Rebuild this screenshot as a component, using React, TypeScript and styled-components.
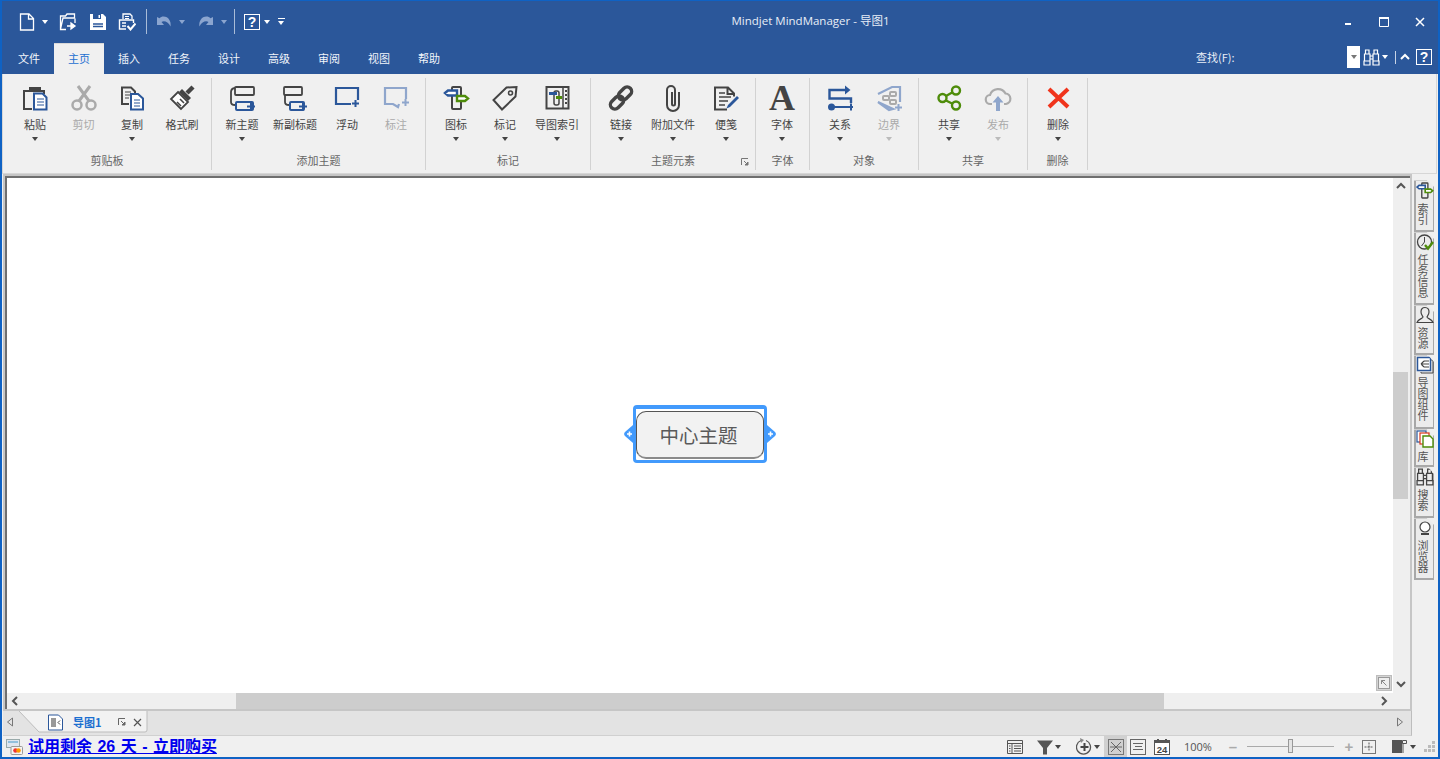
import React from "react";
import styled, { createGlobalStyle } from "styled-components";

const BLUE = "#2b579a";
const DARK = "#444";
const GREEN = "#4e8c0a";
const OFF = "#aaa";
const OFFBLUE = "#8fa6cc";

const GlobalStyle = createGlobalStyle`
  html, body { margin: 0; padding: 0; overflow: hidden; }
  body { font-family: "Noto Sans CJK SC", "Liberation Sans", sans-serif; }
  * { box-sizing: border-box; }
`;

/* ---------- drawings ---------- */

const Svg = styled.svg<{ $s?: number }>`
  width: ${(p) => p.$s ?? 28}px;
  height: ${(p) => p.$s ?? 28}px;
  display: block;
  flex: none;
  fill: none;
`;

const Ico: React.FC<{ s?: number; vb?: number; children: React.ReactNode }> = ({ s, vb = 28, children }) => (
  <Svg $s={s} viewBox={`0 0 ${vb} ${vb}`}>
    {children}
  </Svg>
);

const FlagPost: React.FC<{ s?: number }> = ({ s }) => (
  <Ico s={s}>
    <rect x="10" y="3" width="9" height="22" rx="1" stroke={DARK} strokeWidth="2" />
    <path d="M3 9l3-2.500h9v5H6z" fill="#fff" stroke={BLUE} strokeWidth="2.400" />
    <path d="M15 12h8l3 2.500-3 2.500h-8z" fill="#fff" stroke={GREEN} strokeWidth="2.400" />
  </Ico>
);

const icons: Record<string, React.ReactNode> = {
  paste: (
    <Ico>
      <path d="M11 25H3V7h20v3" stroke={DARK} strokeWidth="2" />
      <path d="M8 6V3h12v3z" fill={DARK} />
      <path d="M13 9.500h8.500l4 4V25.500H13z" fill="#fff" stroke={BLUE} strokeWidth="2" />
      <path d="M16 15h7M16 18h7M16 21h7" stroke={BLUE} strokeWidth="1.200" />
    </Ico>
  ),
  cut: (
    <Ico>
      <circle cx="7" cy="21" r="4.500" stroke={OFF} strokeWidth="2.500" />
      <circle cx="21" cy="21" r="4.500" stroke={OFF} strokeWidth="2.500" />
      <path d="M9 17L20 2M19 17L8 2" stroke={OFF} strokeWidth="3" />
    </Ico>
  ),
  copy: (
    <Ico>
      <path d="M11 20H4V3.500h9l4 4v2" stroke={DARK} strokeWidth="2" />
      <path d="M7 8h6M7 11h5M7 14h4" stroke={DARK} strokeWidth="1.200" />
      <path d="M13 10h7l5 4.500v11H13z" fill="#fff" stroke={BLUE} strokeWidth="2" />
      <path d="M16 16h6M16 19h6M16 22h6" stroke={BLUE} strokeWidth="1.200" />
    </Ico>
  ),
  painter: (
    <Ico>
      <path d="M19 9l6-6" stroke={DARK} strokeWidth="4.500" />
      <path d="M14 5l9 9-3 3-9-9z" fill={DARK} />
      <path d="M10 8l10 10-7 7-10-10z" fill="#fff" stroke={DARK} strokeWidth="1.800" />
      <path d="M9 18l4 4M12 15l4 4" stroke={DARK} strokeWidth="1.600" />
    </Ico>
  ),
  topic: (
    <Ico>
      <rect x="7" y="3" width="19" height="8" rx="1" stroke={DARK} strokeWidth="1.800" />
      <path d="M7 4C3.500 4.500 3 6 3 8v10c0 2 1 3 4 3" stroke={DARK} strokeWidth="1.800" />
      <rect x="8" y="18" width="17" height="8" rx="1" stroke={BLUE} strokeWidth="2" />
      <path d="M19 22.500h8M23 18.500v8" stroke={BLUE} strokeWidth="2" />
    </Ico>
  ),
  subtopic: (
    <Ico>
      <rect x="3" y="3" width="18" height="8" rx="1" stroke={DARK} strokeWidth="1.800" />
      <path d="M4 11v7c0 2 1 3 4 3h2" stroke={DARK} strokeWidth="1.800" />
      <rect x="9" y="18" width="14" height="8" rx="1" stroke={BLUE} strokeWidth="2" />
      <path d="M18 22.500h8M22 18.500v8" stroke={BLUE} strokeWidth="2" />
    </Ico>
  ),
  float: (
    <Ico>
      <path d="M18 20H3V4h22v12" stroke={BLUE} strokeWidth="2.200" />
      <path d="M19 19.500h7M22.500 16v7" stroke={BLUE} strokeWidth="2" />
    </Ico>
  ),
  callout: (
    <Ico>
      <path d="M17 20l-1 3-5-3H3V4h21v11" stroke={OFFBLUE} strokeWidth="2.200" />
      <path d="M20 18.500h7M23.500 15v7" stroke={OFFBLUE} strokeWidth="2" />
    </Ico>
  ),
  flag: <FlagPost />,
  tag: (
    <Ico>
      <path d="M25.500 3l-1 9.500L11 25.500 2.500 16 15.500 3.500z" stroke={DARK} strokeWidth="2" />
      <circle cx="19.500" cy="9" r="2" stroke={DARK} strokeWidth="1.600" />
    </Ico>
  ),
  mapIndex: (
    <Ico>
      <rect x="3.500" y="3" width="22" height="21.500" stroke={DARK} strokeWidth="2" />
      <path d="M20 3v21" stroke={DARK} strokeWidth="1.500" />
      <path d="M22 7h2M22 11h2M22 15h2M22 19h2" stroke={DARK} strokeWidth="1.800" />
      <rect x="11" y="7" width="5" height="14" rx="2" stroke={DARK} strokeWidth="1.500" />
      <path d="M6 11h8v-3H6z" fill={BLUE} />
      <path d="M13 12h6v3h-6z" fill={GREEN} />
    </Ico>
  ),
  link: (
    <Ico>
      <rect x="2.500" y="14" width="15" height="9" rx="4.500" transform="rotate(-45 10 18.500)" stroke={DARK} strokeWidth="3.400" />
      <rect x="10.500" y="5" width="15" height="9" rx="4.500" transform="rotate(-45 18 9.500)" stroke={DARK} strokeWidth="3.400" />
    </Ico>
  ),
  clip: (
    <Ico>
      <path d="M20 8v13a6 6 0 0 1-12 0V6a4 4 0 0 1 8 0v14a1.500 1.500 0 0 1-3 0V8" stroke={DARK} strokeWidth="2" />
    </Ico>
  ),
  note: (
    <Ico>
      <path d="M15 25.500H3V3.500h13l6 6v3M15.500 3.500v6.500h6.500" stroke={DARK} strokeWidth="2" />
      <path d="M7 9h6M7 13h12M7 17h9M7 21h6" stroke={DARK} strokeWidth="1.400" />
      <path d="M25 12l2 2-9 9-3.500 1.500L16 21z" fill={BLUE} />
    </Ico>
  ),
  relation: (
    <Ico>
      <path d="M20 6H3.500v8.500H25V19" stroke={BLUE} strokeWidth="2.400" />
      <path d="M19 1.500L24.500 6 19 10.500z" fill={BLUE} />
      <circle cx="5.500" cy="23" r="3.500" fill={BLUE} />
      <path d="M8 23h19M25 19.500v7" stroke={BLUE} strokeWidth="2" />
    </Ico>
  ),
  boundary: (
    <Ico>
      <path d="M3 10L17 3h8v15M18 25l-4 1L3 18z" stroke={OFFBLUE} strokeWidth="2.200" />
      <rect x="8" y="12" width="6" height="4" rx="1" stroke={OFF} strokeWidth="2" />
      <rect x="15" y="8" width="6" height="4" rx="1" stroke={OFF} strokeWidth="2" />
      <rect x="15" y="16" width="6" height="4" rx="1" stroke={OFF} strokeWidth="2" />
      <path d="M20 23.500h7M23.500 20v7" stroke={OFFBLUE} strokeWidth="2" />
    </Ico>
  ),
  share: (
    <Ico>
      <path d="M11 12l7-4M11 16.500l7 3.500" stroke={GREEN} strokeWidth="2.400" />
      <circle cx="7.500" cy="14" r="4" stroke={GREEN} strokeWidth="2.400" />
      <circle cx="21" cy="6.500" r="4" stroke={GREEN} strokeWidth="2.400" />
      <circle cx="21" cy="21.500" r="4" stroke={GREEN} strokeWidth="2.400" />
    </Ico>
  ),
  publish: (
    <Ico>
      <path d="M8 20H6.500a4.500 4.500 0 0 1-.5-9A8.500 8.500 0 0 1 21.500 9.500 5.300 5.300 0 0 1 22 20h-2" stroke={OFF} strokeWidth="2.200" />
      <path d="M14 12l-5.500 6.500H12V27h4v-8.500h3.500z" fill={OFFBLUE} />
    </Ico>
  ),
  remove: (
    <Ico>
      <path d="M5 5l19 18M24 5L5 23" stroke="#f0341c" strokeWidth="4" />
    </Ico>
  )
};

const Launcher: React.FC<{ c?: string }> = ({ c = "#777" }) => (
  <Ico s={8} vb={8}>
    <path d="M.5 7V.5H7" stroke={c} />
    <path d="M3 3l4 4M7 4v3H4z" fill={c} stroke={c} />
  </Ico>
);

const NewDocIcon = () => (
  <Ico s={18} vb={18}>
    <path d="M2.500 1h8.500l4.500 4.500V17H2.500zM10.500 1v5h5" stroke="#fff" strokeWidth="1.300" />
  </Ico>
);
const OpenIcon = () => (
  <Ico s={18} vb={18}>
    <path d="M7 16.500H1.500V3h5l1.500-2h7.500v4H4L1.500 16" stroke="#fff" strokeWidth="1.300" />
    <path d="M16 5.500V10M8 13h6M12 10l4 3-4 3z" stroke="#fff" strokeWidth="1.300" fill="#fff" />
  </Ico>
);
const SaveIcon = () => (
  <Ico s={18} vb={18}>
    <path d="M1 1h13l3 3v13H1z" fill="#fff" />
    <path d="M4 1h8v5H4z" fill={BLUE} />
    <path d="M9.500 2h1.500v3H9.500z" fill="#fff" />
    <path d="M4 11h10M4 13.500h10" stroke={BLUE} strokeWidth="1.300" />
  </Ico>
);
const PrintIcon = () => (
  <Ico s={18} vb={18}>
    <path d="M5 6V1h7l2 2v3" stroke="#fff" strokeWidth="1.300" />
    <path d="M7 3.500h4M7 5.500h4" stroke="#fff" />
    <path d="M8 16H1.500V7h14v3" stroke="#fff" strokeWidth="1.400" />
    <path d="M4 13h4M4 10h4" stroke="#fff" strokeWidth="1.600" />
    <path d="M9.500 13l3 3.500 5-6" stroke="#fff" strokeWidth="2" />
  </Ico>
);
const UndoIcon: React.FC<{ flip?: boolean }> = ({ flip }) => (
  <Ico s={16} vb={16}>
    <path
      transform={flip ? "matrix(-1 0 0 1 16 0)" : undefined}
      d="M1 3v8h7L5.500 8C8 6.500 12 7.500 14.500 12.500 15.500 7.500 12.500 2.500 7.500 2.500c-1.500 0-3 .7-4 1.700z"
      fill="#8ba5cf"
    />
  </Ico>
);
const HelpBox: React.FC<{ s?: number }> = ({ s = 16 }) => (
  <HelpFrame $s={s}>?</HelpFrame>
);
const BinocularIcon: React.FC<{ c?: string; s?: number }> = ({ c = "#fff", s = 17 }) => (
  <Ico s={s} vb={17}>
    <path d="M2.500 1H6v4H2.500zM11 1h3.500v4H11zM1.500 5H7v7H1.500zM10 5h5.500v7H10zM1 12h6v4H1zM10 12h6v4h-6zM7 7h3M7 10h3" stroke={c} strokeWidth="1.200" />
  </Ico>
);

/* ---------- window chrome ---------- */

const Window = styled.div`
  width: 1440px;
  height: 759px;
  display: flex;
  flex-direction: column;
  background: #f0f0f0;
  border: solid #0f62c4;
  border-width: 1px 2px 2px 2px;
  overflow: hidden;
`;

const TitleBar = styled.div`
  height: 41px;
  flex: none;
  display: flex;
  align-items: center;
  background: ${BLUE};
  color: #fff;
`;

const Qat = styled.div`
  width: 296px;
  flex: none;
  height: 36px;
  padding-left: 14px;
  display: flex;
  align-items: center;
`;

const Slot = styled.div<{ $w: number; $ml?: number }>`
  width: ${(p) => p.$w}px;
  margin-left: ${(p) => p.$ml ?? 0}px;
  flex: none;
  display: flex;
  align-items: center;
  justify-content: center;
`;

const QatSep = styled.div`
  width: 1px;
  height: 25px;
  background: #a9bcd8;
`;

const Caret = styled.span<{ $c?: string }>`
  display: block;
  width: 0;
  height: 0;
  flex: none;
  border-left: 3.500px solid transparent;
  border-right: 3.500px solid transparent;
  border-top: 4px solid ${(p) => p.$c ?? "#fff"};
`;

const CustomizeMark = styled.span`
  display: block;
  width: 7px;
  border-top: 1px solid #fff;
  padding-top: 2px;
  &::after {
    content: "";
    display: block;
    width: 0;
    border-left: 3.500px solid transparent;
    border-right: 3.500px solid transparent;
    border-top: 4px solid #fff;
  }
`;

const HelpFrame = styled.span<{ $s: number }>`
  display: flex;
  align-items: center;
  justify-content: center;
  width: ${(p) => p.$s}px;
  height: ${(p) => p.$s}px;
  border: 1px solid #fff;
  color: #fff;
  font: bold 14px "Liberation Sans", sans-serif;
`;

const Title = styled.div`
  flex: 1;
  text-align: center;
  font-size: 11.500px;
  line-height: 16px;
  color: #e8eef7;
  padding-right: 7px;
  padding-bottom: 2px;
  font-family: "Open Sans", "Noto Sans CJK SC", sans-serif;
`;

const WindowButtons = styled.div`
  width: 108px;
  flex: none;
  height: 32px;
  display: flex;
  align-items: center;
`;

const TabRow = styled.div`
  height: 32px;
  flex: none;
  padding-left: 2px;
  display: flex;
  align-items: stretch;
  background: ${BLUE};
  color: #f2f5fa;
  font-size: 11px;
`;

const MenuTab = styled.div<{ $active?: boolean }>`
  width: 50px;
  flex: none;
  padding-top: 5px;
  line-height: 18px;
  text-align: center;
  margin-top: 1px;
  color: ${(p) => (p.$active ? "#1c6fd0" : "#f2f5fa")};
  background: ${(p) => (p.$active ? "#f0f0f0" : "transparent")};
  border-top: 1px solid ${(p) => (p.$active ? "#d8d8d8" : "transparent")};
`;

const FindArea = styled.div`
  margin-left: auto;
  display: flex;
  align-items: center;
  padding: 0 6px 2px 0;
`;

const FindLabel = styled.span`
  width: 151px;
  font-size: 11px;
  color: #e8eef7;
`;

const FindBox = styled.div`
  width: 13px;
  height: 22px;
  background: #fff;
  display: flex;
  align-items: center;
  justify-content: center;
`;

const ThinSep = styled.span`
  display: block;
  width: 1px;
  height: 13px;
  background: #c8d4e6;
`;

/* ---------- ribbon ---------- */

const Ribbon = styled.div`
  height: 100px;
  flex: none;
  margin-right: 1px;
  display: flex;
  background: #f0f0f0;
  border: solid #d6d6d6;
  border-width: 0 1px 1px 1px;
`;

const Group = styled.section<{ $w: number }>`
  width: ${(p) => p.$w}px;
  flex: none;
  height: 92px;
  margin-top: 4px;
  display: flex;
  flex-direction: column;
  position: relative;
  border-right: 1px solid #d2d2d2;
`;

const GroupButtons = styled.div<{ $pad: number }>`
  height: 74px;
  padding-left: ${(p) => p.$pad}px;
  display: flex;
`;

const GroupName = styled.div`
  height: 16px;
  line-height: 16px;
  text-align: center;
  font-size: 11px;
  color: #666;
`;

const DialogMark = styled.span`
  position: absolute;
  right: 6px;
  bottom: 4px;
`;

const RibbonButton = styled.div<{ $w: number; $off?: boolean }>`
  width: ${(p) => p.$w}px;
  flex: none;
  padding-top: 6px;
  display: flex;
  flex-direction: column;
  align-items: center;
  color: ${(p) => (p.$off ? "#aaa" : DARK)};
  font-size: 11px;
`;

const ButtonLabel = styled.div`
  margin-top: 4px;
  height: 16px;
  line-height: 16px;
  white-space: nowrap;
`;

const CaretRow = styled.div`
  margin-top: 5px;
  height: 4px;
`;

const BigLetter = styled.div`
  width: 28px;
  height: 28px;
  text-align: center;
  font: bold 36px/28px "Liberation Serif", serif;
  color: ${DARK};
`;

/* ---------- workspace ---------- */

const Body = styled.div`
  flex: 1;
  min-height: 0;
  display: flex;
`;

const MainColumn = styled.div`
  flex: 1;
  min-width: 0;
  display: flex;
  flex-direction: column;
`;

const Frame = styled.div`
  flex: 1;
  min-height: 0;
  margin-left: 1px;
  display: flex;
  border: 2px solid #c6c6c6;
`;

const FrameInner = styled.div`
  flex: 1;
  min-width: 0;
  display: flex;
  border-top: 2px solid #6f6f6f;
  border-left: 2px solid #6f6f6f;
`;

const CanvasColumn = styled.div`
  flex: 1;
  min-width: 0;
  display: flex;
  flex-direction: column;
`;

const Canvas = styled.div`
  flex: 1;
  min-height: 0;
  position: relative;
  background: #fff;
  display: flex;
  align-items: center;
  justify-content: center;
  padding-bottom: 3px;
`;

const NavCorner = styled.div`
  position: absolute;
  right: 1px;
  bottom: 2px;
  width: 16px;
  height: 16px;
  background: #d4d4d4;
  border: 1px solid #bdbdbd;
  display: flex;
  align-items: center;
  justify-content: center;
`;

const Selection = styled.div`
  position: relative;
  width: 134px;
  height: 58px;
  background: #fff;
  border: 3px solid #429afc;
  border-top-width: 4px;
  border-radius: 4px;
  padding: 2px 0 1px;
`;

const Topic = styled.div`
  height: 48px;
  padding-right: 3px;
  background: #f2f2f2;
  border: 1px solid #555;
  border-bottom: 2px solid #8a8a8a;
  border-radius: 10px;
  display: flex;
  align-items: center;
  justify-content: center;
  color: #5a5a5a;
  font-size: 19.500px;
  line-height: 24px;
`;

const Grip = styled.svg<{ $side: "left" | "right" }>`
  position: absolute;
  top: 16px;
  ${(p) => p.$side}: -12px;
  width: 9px;
  height: 18px;
  display: block;
`;

const HScroll = styled.div`
  height: 16px;
  flex: none;
  background: #efefef;
  display: flex;
  align-items: center;
`;

const HThumb = styled.div`
  height: 16px;
  width: 928px;
  margin-left: 213px;
  margin-right: 212px;
  background: #cdcdcd;
`;

const VScroll = styled.div`
  width: 17px;
  flex: none;
  background: #efefef;
  display: flex;
  flex-direction: column;
`;

const VThumb = styled.div`
  width: 15px;
  height: 127px;
  margin-top: 178px;
  margin-bottom: 177px;
  background: #cdcdcd;
`;

const ArrowSlot = styled.div<{ $w: number; $h: number }>`
  width: ${(p) => p.$w}px;
  height: ${(p) => p.$h}px;
  flex: none;
  display: flex;
  align-items: center;
  justify-content: center;
`;

const Chevron: React.FC<{ dir: "up" | "down" | "left" | "right"; c?: string }> = ({ dir, c = "#555" }) => {
  const d = { up: "M1 7l4-4 4 4", down: "M1 3l4 4 4-4", left: "M7 1L3 5l4 4", right: "M3 1l4 4-4 4" }[dir];
  return (
    <Ico s={10} vb={10}>
      <path d={d} stroke={c} strokeWidth="2" />
    </Ico>
  );
};

/* ---------- document tab strip ---------- */

const DocStrip = styled.div`
  height: 25px;
  flex: none;
  background: #e3e3e3;
  display: flex;
  align-items: flex-start;
  border-right: 1px solid #bdbdbd;
  border-bottom: 1px solid #d0d0d0;
  margin-left: 1px;
`;

const DocTab = styled.div`
  position: relative;
  width: 130px;
  height: 22px;
  margin-left: 2px;
  padding-left: 28px;
  display: flex;
  align-items: center;
`;

const DocTabShape = styled.svg`
  position: absolute;
  left: 0;
  top: 0;
  width: 130px;
  height: 22px;
`;

const DocTitle = styled.span`
  position: relative;
  margin-left: 9px;
  width: 45px;
  color: #1c6fd0;
  font-size: 11px;
  font-weight: 700;
`;

const DocTabIcons = styled.span`
  position: relative;
  display: flex;
  align-items: center;
  gap: 7px;
`;

const Triangle: React.FC<{ dir: "left" | "right" }> = ({ dir }) => (
  <Ico s={10} vb={10}>
    <path d={dir === "left" ? "M7.500 1v8L2.500 5z" : "M2.500 1v8l5-4z"} stroke="#777" />
  </Ico>
);

const StripArrow = styled(Slot)<{ $end?: boolean }>`
  height: 22px;
  margin-left: ${(p) => (p.$end ? "auto" : "0")};
  margin-right: ${(p) => (p.$end ? "6px" : "0")};
`;

/* ---------- right sidebar ---------- */

const Sidebar = styled.aside`
  width: 26px;
  flex: none;
  padding: 6px 0 0 2px;
  display: flex;
  flex-direction: column;
`;

const SideTab = styled.div<{ $h: number }>`
  position: relative;
  width: 20px;
  height: ${(p) => p.$h}px;
  flex: none;
  padding-top: 1px;
  background: #ececec;
  border: solid #a8a8a8;
  border-width: 0 1px 2px 2px;
  display: flex;
  flex-direction: column;
  align-items: center;
  clip-path: polygon(0 0, 70% 0, 100% 7px, 100% 100%, 0 100%);
  &::before {
    content: "";
    position: absolute;
    left: -2px;
    right: 6px;
    top: 0;
    border-top: 1px solid #cfcfcf;
  }
`;

const SideText = styled.div`
  writing-mode: vertical-rl;
  margin: 3px 3px 0 0;
  color: #555;
  font-size: 11px;
  line-height: 14px;
`;

/* ---------- status bar ---------- */

const StatusBar = styled.footer`
  height: 21px;
  flex: none;
  padding: 0 2px 0 4px;
  display: flex;
  align-items: center;
`;

const BuyLink = styled.a`
  margin-left: 5px;
  padding-top: 1px;
  color: #0000ee;
  font-size: 16px;
  font-weight: 700;
  line-height: 20px;
  word-spacing: 1px;
  text-decoration: underline;
  font-family: "Liberation Sans", "Noto Sans CJK SC", sans-serif;
  white-space: nowrap;
`;

const StatusTools = styled.div`
  margin-left: auto;
  height: 100%;
  display: flex;
  align-items: center;
`;

const ActiveTool = styled.div`
  width: 23px;
  height: 100%;
  margin-left: 2px;
  background: #d0d0d0;
  display: flex;
  align-items: center;
  justify-content: center;
`;

const Zoom = styled.span`
  width: 28px;
  margin-left: 14px;
  font: 11px "Open Sans", sans-serif;
  color: #555;
  white-space: nowrap;
`;

const SliderTrack = styled.div`
  position: relative;
  width: 87px;
  height: 1px;
  margin-left: 9px;
  background: #aaa;
`;

const SliderThumb = styled.div`
  position: absolute;
  left: 41px;
  top: -7px;
  width: 5px;
  height: 14px;
  background: #e4e4e4;
  border: 1px solid #999;
`;

const ZoomSign = styled.span`
  display: block;
  color: #aaa;
  font: bold 15px/15px "Liberation Sans", sans-serif;
`;

const GripDots = styled.svg`
  width: 12px;
  height: 12px;
  margin-left: 6px;
  fill: #bbb;
`;

/* ---------- data ---------- */

type Btn = { label: string; icon: string; w: number; caret?: boolean; off?: boolean };
type Grp = { name: string; w: number; pad: number; launcher?: boolean; buttons: Btn[] };

const groups: Grp[] = [
  {
    name: "剪贴板", w: 209, pad: 8,
    buttons: [
      { label: "粘贴", icon: "paste", w: 48, caret: true },
      { label: "剪切", icon: "cut", w: 49, off: true },
      { label: "复制", icon: "copy", w: 48, caret: true },
      { label: "格式刷", icon: "painter", w: 52 }
    ]
  },
  {
    name: "添加主题", w: 214, pad: 6,
    buttons: [
      { label: "新主题", icon: "topic", w: 48, caret: true },
      { label: "新副标题", icon: "subtopic", w: 58 },
      { label: "浮动", icon: "float", w: 46 },
      { label: "标注", icon: "callout", w: 52, off: true }
    ]
  },
  {
    name: "标记", w: 165, pad: 6,
    buttons: [
      { label: "图标", icon: "flag", w: 48, caret: true },
      { label: "标记", icon: "tag", w: 50, caret: true },
      { label: "导图索引", icon: "mapIndex", w: 54, caret: true }
    ]
  },
  {
    name: "主题元素", w: 165, pad: 6, launcher: true,
    buttons: [
      { label: "链接", icon: "link", w: 48, caret: true },
      { label: "附加文件", icon: "clip", w: 56, caret: true },
      { label: "便笺", icon: "note", w: 50, caret: true }
    ]
  },
  {
    name: "字体", w: 54, pad: 2,
    buttons: [{ label: "字体", icon: "font", w: 48, caret: true }]
  },
  {
    name: "对象", w: 109, pad: 6,
    buttons: [
      { label: "关系", icon: "relation", w: 48, caret: true },
      { label: "边界", icon: "boundary", w: 50, caret: true, off: true }
    ]
  },
  {
    name: "共享", w: 109, pad: 6,
    buttons: [
      { label: "共享", icon: "share", w: 48, caret: true },
      { label: "发布", icon: "publish", w: 50, caret: true, off: true }
    ]
  },
  {
    name: "删除", w: 60, pad: 6,
    buttons: [{ label: "删除", icon: "remove", w: 48, caret: true }]
  }
];

const menuTabs = ["文件", "主页", "插入", "任务", "设计", "高级", "审阅", "视图", "帮助"];

const sideTabs: { label: string; h: number; icon: React.ReactNode }[] = [
  { label: "索引", h: 52, icon: <FlagPost s={19} /> },
  {
    label: "任务信息", h: 73,
    icon: (
      <Ico s={18} vb={18}>
        <circle cx="8.500" cy="9" r="7" stroke={DARK} strokeWidth="1.300" />
        <path d="M8.500 4v5l-3 4" stroke={DARK} />
        <path d="M9 12l3 3.500 5-6.500" stroke={GREEN} strokeWidth="2.400" />
      </Ico>
    )
  },
  {
    label: "资源", h: 50,
    icon: (
      <Ico s={18} vb={18}>
        <path d="M9 1.500c-3 0-4 2-4 4.500s1.500 4 2 5c0 1.500-5 2-6 5.500h16c-1-3.500-6-4-6-5.500.5-1 2-2.500 2-5S12 1.500 9 1.500z" stroke={DARK} strokeWidth="1.200" />
      </Ico>
    )
  },
  {
    label: "导图组件", h: 74,
    icon: (
      <Ico s={18} vb={18}>
        <path d="M15 4h2v13H5v-1" stroke={DARK} />
        <rect x="1.500" y="1.500" width="13" height="13" fill="#fff" stroke={BLUE} strokeWidth="1.500" />
        <path d="M5 8h8M8 5h5M8 11h5M5 8l3-3M5 8l3 3" stroke={DARK} strokeWidth="1.100" />
      </Ico>
    )
  },
  {
    label: "库", h: 38,
    icon: (
      <Ico s={18} vb={18}>
        <rect x="1" y="1" width="9" height="11" fill="#fff" stroke={BLUE} strokeWidth="1.200" />
        <rect x="4" y="3" width="9" height="11" fill="#fff" stroke="#d8351c" strokeWidth="1.200" />
        <path d="M7 6h7l3 3v8H7z" fill="#fff" stroke={GREEN} strokeWidth="1.400" />
      </Ico>
    )
  },
  { label: "搜索", h: 51, icon: <BinocularIcon c={DARK} s={18} /> },
  {
    label: "浏览器", h: 62,
    icon: (
      <Ico s={18} vb={18}>
        <circle cx="9" cy="8" r="5" fill="#fff" stroke={DARK} strokeWidth="1.200" />
        <path d="M5 14h8v2H5z" fill={DARK} />
      </Ico>
    )
  }
];

/* ---------- page ---------- */

const RibbonGroup: React.FC<{ g: Grp }> = ({ g }) => (
  <Group $w={g.w}>
    <GroupButtons $pad={g.pad}>
      {g.buttons.map((b) => (
        <RibbonButton key={b.label} $w={b.w} $off={b.off}>
          {b.icon === "font" ? <BigLetter>A</BigLetter> : icons[b.icon]}
          <ButtonLabel>{b.label}</ButtonLabel>
          {b.caret && (
            <CaretRow>
              <Caret $c={b.off ? "#bbb" : DARK} />
            </CaretRow>
          )}
        </RibbonButton>
      ))}
    </GroupButtons>
    <GroupName>{g.name}</GroupName>
    {g.launcher && (
      <DialogMark>
        <Launcher />
      </DialogMark>
    )}
  </Group>
);

export default function App() {
  return (
    <>
      <GlobalStyle />
      <Window>
        <TitleBar>
          <Qat>
            <Slot $w={22}><NewDocIcon /></Slot>
            <Slot $w={14}><Caret /></Slot>
            <Slot $w={32}><OpenIcon /></Slot>
            <Slot $w={28}><SaveIcon /></Slot>
            <Slot $w={30}><PrintIcon /></Slot>
            <Slot $w={8}><QatSep /></Slot>
            <Slot $w={28}><UndoIcon /></Slot>
            <Slot $w={8}><Caret $c="#8ba5cf" /></Slot>
            <Slot $w={30} $ml={5}><UndoIcon flip /></Slot>
            <Slot $w={5}><Caret $c="#8ba5cf" /></Slot>
            <Slot $w={16}><QatSep /></Slot>
            <Slot $w={20}><HelpBox /></Slot>
            <Slot $w={10}><Caret /></Slot>
            <Slot $w={18}><CustomizeMark /></Slot>
          </Qat>
          <Title>Mindjet MindManager - 导图1</Title>
          <WindowButtons>
            <Slot $w={36}>
              <Ico s={10} vb={10}><path d="M2 7h6" stroke="#fff" strokeWidth="2" /></Ico>
            </Slot>
            <Slot $w={36}>
              <Ico s={10} vb={10}><path d="M.5 1.500h9v8h-9z" stroke="#fff" /><path d="M0 1h10" stroke="#fff" strokeWidth="2" /></Ico>
            </Slot>
            <Slot $w={36}>
              <Ico s={10} vb={10}><path d="M1 1l8 8M9 1L1 9" stroke="#fff" strokeWidth="1.500" /></Ico>
            </Slot>
          </WindowButtons>
        </TitleBar>

        <TabRow>
          {menuTabs.map((t) => (
            <MenuTab key={t} $active={t === "主页"}>{t}</MenuTab>
          ))}
          <FindArea>
            <FindLabel>查找(F):</FindLabel>
            <FindBox><Caret $c="#777" /></FindBox>
            <Slot $w={22}><BinocularIcon /></Slot>
            <Slot $w={6}><Caret /></Slot>
            <Slot $w={14}><ThinSep /></Slot>
            <Slot $w={6}><Chevron dir="up" c="#fff" /></Slot>
            <Slot $w={16} $ml={8}><HelpBox /></Slot>
          </FindArea>
        </TabRow>

        <Ribbon>
          {groups.map((g) => (
            <RibbonGroup key={g.name + g.w} g={g} />
          ))}
        </Ribbon>

        <Body>
          <MainColumn>
            <Frame>
              <FrameInner>
                <CanvasColumn>
                  <Canvas>
                    <Selection>
                      <Grip $side="left" viewBox="0 0 9 18">
                        <path d="M9 0v18L1 11a3 3 0 0 1 0-4z" fill="#429afc" />
                        <path d="M3 9h5M5.500 6.500v5" stroke="#fff" strokeWidth="1.600" />
                      </Grip>
                      <Topic>中心主题</Topic>
                      <Grip $side="right" viewBox="0 0 9 18">
                        <path d="M0 0v18l8-7a3 3 0 0 0 0-4z" fill="#429afc" />
                        <path d="M1 9h5M3.500 6.500v5" stroke="#fff" strokeWidth="1.600" />
                      </Grip>
                    </Selection>
                    <NavCorner>
                      <Ico s={12} vb={12}>
                        <rect x=".5" y=".5" width="11" height="11" fill="#eee" stroke="#999" />
                        <path d="M8.500 8.500L3.500 3.500M3.500 7V3.500H7" stroke="#888" />
                      </Ico>
                    </NavCorner>
                  </Canvas>
                  <HScroll>
                    <ArrowSlot $w={16} $h={16}><Chevron dir="left" /></ArrowSlot>
                    <HThumb />
                    <ArrowSlot $w={16} $h={16}><Chevron dir="right" /></ArrowSlot>
                  </HScroll>
                </CanvasColumn>
                <VScroll>
                  <ArrowSlot $w={15} $h={16}><Chevron dir="up" /></ArrowSlot>
                  <VThumb />
                  <ArrowSlot $w={15} $h={16}><Chevron dir="down" /></ArrowSlot>
                </VScroll>
              </FrameInner>
            </Frame>
            <DocStrip>
              <StripArrow $w={14}><Triangle dir="left" /></StripArrow>
              <DocTab>
                <DocTabShape viewBox="0 0 130 22">
                  <path d="M0 0L20 21H126a2 2 0 0 0 2-2V0z" fill="#f2f2f2" />
                  <path d="M0 0L20 21H126a2 2 0 0 0 2-2V0" stroke="#bdbdbd" fill="none" />
                </DocTabShape>
                <DocTabIcons>
                  <Ico s={17} vb={17}>
                    <path d="M1.500 1h10l4 4v11h-14z" fill="#fff" stroke={BLUE} />
                    <path d="M4 4h5v9H4z" fill="#999" />
                    <path d="M11 8.500l2-2M11 8.500l2 2" stroke={DARK} />
                  </Ico>
                </DocTabIcons>
                <DocTitle>导图1</DocTitle>
                <DocTabIcons>
                  <Launcher c="#666" />
                  <Ico s={9} vb={9}><path d="M1 1l7 7M8 1L1 8" stroke="#555" strokeWidth="1.200" /></Ico>
                </DocTabIcons>
              </DocTab>
              <StripArrow $w={10} $end><Triangle dir="right" /></StripArrow>
            </DocStrip>
          </MainColumn>
          <Sidebar>
            {sideTabs.map((t) => (
              <SideTab key={t.label} $h={t.h}>
                {t.icon}
                <SideText>{t.label}</SideText>
              </SideTab>
            ))}
          </Sidebar>
        </Body>

        <StatusBar>
          <Ico s={17} vb={17}>
            <rect x=".5" y="1.500" width="13" height="8" fill="#dfe6f0" stroke="#9aa" />
            <path d="M2 4h10" stroke="#49c" />
            <rect x="5" y="8.500" width="11.500" height="8" rx="1" fill="#f4f4f4" stroke="#999" />
            <circle cx="9.500" cy="12.500" r="2.300" fill="#e33" />
            <circle cx="12.500" cy="12.500" r="2.300" fill="#f90" />
          </Ico>
          <BuyLink href="#">试用剩余 26 天 - 立即购买</BuyLink>
          <StatusTools>
            <Slot $w={16}>
              <Ico s={16} vb={16}>
                <path d="M.5 1.500h15v13H.5zM.5 4.500h15M5 4.500v10M7 7h7M7 9.500h7M7 12h7M2 7h1.500M2 9.500h1.500M2 12h1.500" stroke="#555" />
              </Ico>
            </Slot>
            <Slot $w={16} $ml={14}>
              <Ico s={16} vb={16}><path d="M0 1.500h16L10 9v6.500H6V9z" fill="#555" /></Ico>
            </Slot>
            <Slot $w={9}><Caret $c={DARK} /></Slot>
            <Slot $w={16} $ml={14}>
              <Ico s={17} vb={17}>
                <path d="M5 2.500a7 7 0 1 0 5 0" stroke="#555" strokeWidth="1.300" />
                <path d="M4 0l4 2-3 3z" fill="#888" />
                <path d="M8.500 5v8M4.500 9h8" stroke="#444" strokeWidth="2" />
              </Ico>
            </Slot>
            <Slot $w={10}><Caret $c={DARK} /></Slot>
            <ActiveTool>
              <Ico s={16} vb={16}>
                <rect x=".5" y=".5" width="15" height="15" stroke="#777" />
                <path d="M3 3l10 10M13 3L3 13M2 8h12" stroke="#666" />
              </Ico>
            </ActiveTool>
            <Slot $w={16} $ml={3}>
              <Ico s={16} vb={16}>
                <rect x=".5" y=".5" width="15" height="15" stroke="#666" />
                <path d="M3 4.500h10M5 7.500h7M3 10.500h10" stroke="#666" />
              </Ico>
            </Slot>
            <Slot $w={16} $ml={8}>
              <Ico s={16} vb={16}>
                <rect x=".5" y="1.500" width="15" height="14" fill="#fff" stroke="#555" />
                <path d="M0 1h16v3H0zM3 0h2v2H3zM11 0h2v2h-2z" fill="#555" />
                <text x="8" y="14" textAnchor="middle" fontSize="9.500" fontWeight="700" fill="#444" fontFamily="Liberation Sans">24</text>
              </Ico>
            </Slot>
            <Zoom>100%</Zoom>
            <Slot $w={10} $ml={16}><ZoomSign>–</ZoomSign></Slot>
            <SliderTrack><SliderThumb /></SliderTrack>
            <Slot $w={10} $ml={10}><ZoomSign>+</ZoomSign></Slot>
            <Slot $w={14} $ml={8}>
              <Ico s={14} vb={14}>
                <rect x=".5" y=".5" width="13" height="13" stroke="#777" />
                <path d="M7 2.500v9M2.500 7h9" stroke="#555" strokeDasharray="2 1" />
              </Ico>
            </Slot>
            <Slot $w={15} $ml={16}>
              <Ico s={15} vb={15}>
                <path d="M0 1h10v13H0z" fill="#555" />
                <path d="M10.500 1.500h4v3h-4zM11 4v10" stroke="#555" />
              </Ico>
            </Slot>
            <Slot $w={11}><Caret $c={DARK} /></Slot>
            <GripDots viewBox="0 0 12 12">
              <path d="M8 0h3v3H8zM4 4h3v3H4zM8 4h3v3H8zM0 8h3v3H0zM4 8h3v3H4zM8 8h3v3H8z" />
            </GripDots>
          </StatusTools>
        </StatusBar>
      </Window>
    </>
  );
}
